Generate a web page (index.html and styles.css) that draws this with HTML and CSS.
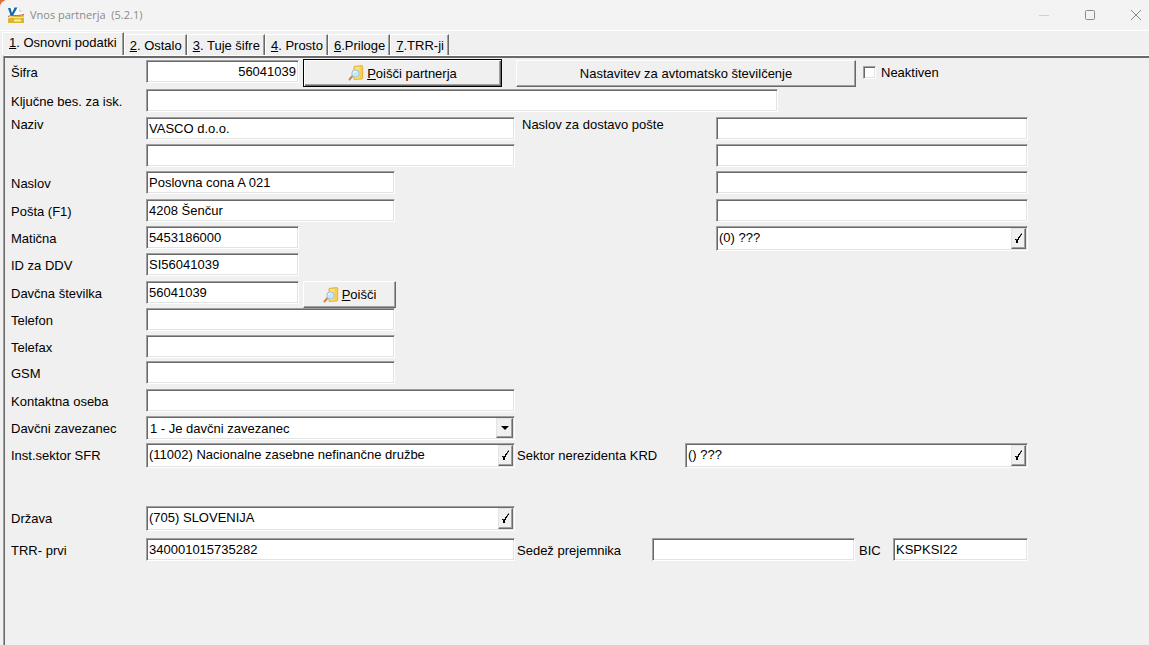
FILE: index.html
```html
<!DOCTYPE html>
<html lang="sl">
<head>
<meta charset="utf-8">
<title>Vnos partnerja (5.2.1)</title>
<link rel="stylesheet" href="styles.css">
</head>
<body>
<svg class="defs" width="0" height="0" aria-hidden="true">
  <symbol id="find" viewBox="0 0 16 16">
    <path d="M6 1.500 13.500.500q1.200 0 1.200 1.200V13q0 1-1.200 1L6 14.500z" fill="#f6cf4e"/>
    <path d="M6.500 2 11.500 1.500v12l-5 .5z" fill="#fbe27a"/>
    <path d="M6 1.500 13.500.500q1.200 0 1.200 1.200V13q0 1-1.200 1L6 14.500z" fill="none" stroke="#e0a62c" stroke-width=".8"/>
    <path d="M4.500 11 1.500 14.500" stroke="#c98a4a" stroke-width="2" stroke-linecap="round"/>
    <circle cx="7.500" cy="8.500" r="3.700" fill="#c6e9fa" stroke="#a3bfd0"/>
    <path d="M5.500 8a2 2 0 0 1 2-1.800" fill="none" stroke="#fff"/>
  </symbol>
  <symbol id="tick" viewBox="0 0 9 11">
    <path d="M1 6.500h1.500M2.500 6.500v3.500M3.500 6v4M4.500 4v3M5.500 3v2M6.500 1.500v2M7.500 .500v1.500" fill="none" stroke="#000"/>
  </symbol>
</svg>
<div class="window">
  <header class="titlebar">
    <svg class="app-icon" viewBox="0 0 17 17" aria-hidden="true">
      <path d="M2 1h10l4 4v11H2z" fill="#fff"/>
      <path d="M12 1v4h4z" fill="#ddd"/>
      <path d="M1 10.500C5 8.500 9 9.500 17 8v8H1z" fill="#ddb52c"/>
      <path d="M1 9.500C5 7.500 9 9.500 17 7.500" fill="none" stroke="#c0563a"/>
      <path d="M1 11c5-2 8 1 16-1" fill="none" stroke="#fff3b0"/>
      <path d="M7 13.500h7" stroke="#fff0a0" stroke-width="2"/>
      <path d="M1 1h2.500L5 6 7.500.500h3L6 8.500H3.500z" fill="#1767b0"/>
    </svg>
    <h1 class="title">Vnos partnerja &nbsp;(5.2.1)</h1>
    <div class="controls">
      <button class="control" type="button" aria-label="Pomanjšaj"><svg viewBox="0 0 12 12"><path d="M1 6.500h10" stroke="#d0d0d0"/></svg></button>
      <button class="control" type="button" aria-label="Povečaj"><svg viewBox="0 0 12 12"><rect x="1.500" y="1.500" width="9" height="9" rx="1" fill="none" stroke="#8a8a8a"/></svg></button>
      <button class="control" type="button" aria-label="Zapri"><svg viewBox="0 0 12 12"><path d="M1 1l10 10M11 1 1 11" stroke="#8a8a8a"/></svg></button>
    </div>
  </header>

  <nav class="tabs" role="tablist">
    <button class="tab tab-active" type="button" role="tab" aria-selected="true"><u>1</u>. Osnovni podatki</button>
    <button class="tab" type="button" role="tab"><u>2</u>. Ostalo</button>
    <button class="tab" type="button" role="tab"><u>3</u>. Tuje šifre</button>
    <button class="tab" type="button" role="tab"><u>4</u>. Prosto</button>
    <button class="tab" type="button" role="tab"><u>6</u>.Priloge</button>
    <button class="tab" type="button" role="tab"><u>7</u>.TRR-ji</button>
  </nav>

  <form class="panel">
    <div class="row row-top">
      <label class="label" for="sifra">Šifra</label>
      <input class="field w-short number" id="sifra" value="56041039">
      <button class="button button-default" type="button"><svg class="icon"><use href="#find"/></svg><span><u>P</u>oišči partnerja</span></button>
      <button class="button button-wide" type="button">Nastavitev za avtomatsko številčenje</button>
      <label class="check"><input type="checkbox">Neaktiven</label>
    </div>
    <div class="row">
      <label class="label" for="kljuc">Ključne bes. za isk.</label>
      <input class="field w-key" id="kljuc">
    </div>

    <div class="columns">
      <div class="lines lines-main">
        <label class="label label-high" for="naziv">Naziv</label>
        <input class="field w-long" id="naziv" value="VASCO d.o.o.">
        <span></span>
        <input class="field w-long" aria-label="Naziv 2">
        <label class="label" for="naslov">Naslov</label>
        <input class="field w-medium" id="naslov" value="Poslovna cona A 021">
        <label class="label" for="posta">Pošta (F1)</label>
        <input class="field w-medium" id="posta" value="4208 Šenčur">
        <label class="label" for="maticna">Matična</label>
        <input class="field w-short" id="maticna" value="5453186000">
        <label class="label" for="ddv">ID za DDV</label>
        <input class="field w-short" id="ddv" value="SI56041039">
        <label class="label" for="davcna">Davčna številka</label>
        <div class="pair">
          <input class="field w-short" id="davcna" value="56041039">
          <button class="button button-find" type="button"><svg class="icon"><use href="#find"/></svg><span><u>P</u>oišči</span></button>
        </div>
        <label class="label" for="telefon">Telefon</label>
        <input class="field w-medium" id="telefon">
        <label class="label" for="telefax">Telefax</label>
        <input class="field w-medium" id="telefax">
        <label class="label" for="gsm">GSM</label>
        <input class="field w-medium" id="gsm">
        <label class="label" for="oseba">Kontaktna oseba</label>
        <input class="field w-long" id="oseba">
        <label class="label" for="zavezanec">Davčni zavezanec</label>
        <div class="select">
          <select id="zavezanec"><option>1 - Je davčni zavezanec</option></select>
          <span class="arrow"></span>
        </div>
      </div>
      <div class="lines lines-post">
        <label class="label label-high" for="dostava">Naslov za dostavo pošte</label>
        <input class="field w-post" id="dostava">
        <input class="field w-post" aria-label="Naslov za dostavo 2">
        <input class="field w-post" aria-label="Naslov za dostavo 3">
        <input class="field w-post" aria-label="Naslov za dostavo 4">
        <div class="lookup w-post">
          <input aria-label="Pošta za dostavo" value="(0) ???">
          <button type="button" aria-label="Izberi pošto"><svg><use href="#tick"/></svg></button>
        </div>
      </div>
    </div>

    <div class="row row-sector">
      <label class="label" for="sfr">Inst.sektor SFR</label>
      <div class="lookup w-long">
        <input id="sfr" value="(11002) Nacionalne zasebne nefinančne družbe">
        <button type="button" aria-label="Izberi sektor SFR"><svg><use href="#tick"/></svg></button>
      </div>
      <label class="label label-krd" for="krd">Sektor nerezidenta KRD</label>
      <div class="lookup w-krd">
        <input id="krd" value="() ???">
        <button type="button" aria-label="Izberi sektor KRD"><svg><use href="#tick"/></svg></button>
      </div>
    </div>
    <div class="row row-country">
      <label class="label" for="drzava">Država</label>
      <div class="lookup w-long">
        <input id="drzava" value="(705) SLOVENIJA">
        <button type="button" aria-label="Izberi državo"><svg><use href="#tick"/></svg></button>
      </div>
    </div>
    <div class="row">
      <label class="label" for="trr">TRR- prvi</label>
      <input class="field w-long" id="trr" value="340001015735282">
      <label class="label label-seat" for="sedez">Sedež prejemnika</label>
      <input class="field w-seat" id="sedez">
      <label class="label label-bic" for="bic">BIC</label>
      <input class="field w-bic" id="bic" value="KSPKSI22">
    </div>
  </form>
</div>
</body>
</html>
```
FILE: styles.css
```css
* {
  box-sizing: border-box;
}

body {
  margin: 0;
  background: #e0703c;
  color: #000;
}

body,
button,
input,
select {
  font: 13px/15px "Liberation Sans", Arial, sans-serif;
}

button,
input,
select {
  margin: 0;
  padding: 0;
  border: 0;
  border-radius: 0;
  color: #000;
}

.defs {
  position: absolute;
}

.window {
  display: flex;
  flex-direction: column;
  min-height: 100vh;
  border-top-left-radius: 8px;
  background: #f0f0f0;
  overflow: hidden;
}

/* Title bar */
.titlebar {
  display: flex;
  align-items: center;
  height: 31px;
  padding-left: 7px;
  background: #f3f3f3;
  border-bottom: 1px solid #fff;
}

.app-icon {
  width: 17px;
  height: 17px;
}

.title {
  flex: 1;
  margin: 0 0 0 6px;
  font: 11px/16px "Open Sans", "Noto Sans", sans-serif;
  color: #8a8a8a;
}

.controls {
  display: flex;
  gap: 34px;
  padding-right: 7px;
}

.control {
  width: 12px;
  height: 12px;
  background: none;
}

.control svg {
  display: block;
  width: 12px;
  height: 12px;
}

/* Tabs */
.tabs {
  display: flex;
  align-items: flex-end;
  height: 24px;
  padding-left: 2px;
}

.tab {
  height: 21px;
  padding: 0 4px 0 5px;
  background: #f0f0f0;
  border-top: 1px solid #fff;
  border-left: 1px solid #fff;
  border-right: 1px solid #696969;
  box-shadow: inset -1px 0 #a0a0a0;
  white-space: nowrap;
}

.tab-active {
  height: 23px;
  padding: 0 6px 3px 6px;
}

/* Form panel */
.panel {
  flex: 1;
  margin-left: 3px;
  padding: 3px 8px 8px 7px;
  border-top: 1px solid #fff;
  border-left: 1px solid #a0a0a0;
  box-shadow: inset 1px 2px #696969, inset 0 1px #a0a0a0;
}

.row {
  display: flex;
  align-items: flex-start;
  height: 28px;
}

.row-top {
  padding-top: 1px;
  height: 30px;
}

.row-sector {
  height: 63px;
}

.row-country {
  height: 32px;
}

.label {
  flex: none;
  width: 135px;
  line-height: 25px;
  white-space: nowrap;
}

.label-high {
  line-height: 15px;
}

.label-krd {
  width: 168px;
  margin-left: 2px;
}

.label-seat {
  width: 135px;
  margin-left: 2px;
}

.label-bic {
  width: 34px;
  margin-left: 4px;
}

.field,
.lookup,
.select {
  background: #fff;
  border: 1px solid;
  border-color: #a0a0a0 #fff #fff #a0a0a0;
  box-shadow: inset 1px 1px #696969, inset -1px -1px #e3e3e3;
}

.field {
  flex: none;
  height: 23px;
  padding: 1px 2px;
  outline: 0;
}

.number {
  text-align: right;
}

.w-short { width: 153px; }
.w-medium { width: 249px; }
.w-long { width: 369px; }
.w-key { width: 632px; }
.w-post { width: 312px; }
.w-krd { width: 343px; }
.w-seat { width: 203px; }
.w-bic { width: 135px; }

.columns {
  display: flex;
  gap: 7px;
}

.lines {
  display: grid;
  align-items: start;
}

.lines-main {
  grid-template-columns: 135px 369px;
  grid-template-rows: 27px 27px 28px 27px 27px 28px 27px 27px 26px 28px 27px 27px;
}

.lines-post {
  grid-template-columns: 194px 312px;
  grid-template-rows: 27px 27px 28px 27px 27px;
}

.lines-post > :not(label) {
  grid-column: 2;
}

.pair {
  display: flex;
  gap: 4px;
}

/* Field with a lookup button */
.lookup {
  display: flex;
  flex: none;
  height: 25px;
  padding: 1px;
}

.lookup input {
  flex: 1;
  min-width: 0;
  height: 19px;
  padding-left: 1px;
  background: none;
  outline: 0;
}

.lookup button {
  display: grid;
  place-items: center;
  width: 15px;
  background: #f0f0f0;
  border: 1px solid;
  border-color: #e3e3e3 #696969 #696969 #e3e3e3;
  box-shadow: inset -1px -1px #a0a0a0;
}

.lookup svg {
  width: 9px;
  height: 11px;
}

.select {
  position: relative;
  height: 24px;
  padding: 1px;
}

.select select {
  width: 100%;
  height: 20px;
  padding-left: 2px;
  appearance: none;
  background: none;
  outline: 0;
}

.arrow {
  position: absolute;
  top: 1px;
  right: 1px;
  bottom: 1px;
  display: grid;
  place-items: center;
  width: 17px;
  background: #f0f0f0;
  border: 1px solid;
  border-color: #e3e3e3 #696969 #696969 #e3e3e3;
  box-shadow: inset -1px -1px #a0a0a0;
  pointer-events: none;
}

.arrow::before {
  content: "";
  border: 4px solid transparent;
  border-top-color: #000;
  border-bottom: 0;
}

/* Buttons */
.button {
  display: flex;
  flex: none;
  align-items: center;
  justify-content: center;
  gap: 3px;
  height: 27px;
  background: #f0f0f0;
  border: 1px solid;
  border-color: #fff #696969 #696969 #fff;
  box-shadow: inset -1px -1px #a0a0a0;
}

.button-default {
  width: 199px;
  height: 28px;
  margin: -1px 0 0 4px;
  border-color: #000;
  box-shadow: inset 1px 1px #fff, inset -1px -1px #696969, inset -2px -2px #a0a0a0;
}

.button-wide {
  width: 340px;
  margin-left: 14px;
}

.button-find {
  width: 93px;
}

.icon {
  width: 16px;
  height: 16px;
}

.check {
  display: flex;
  align-items: center;
  gap: 5px;
  height: 25px;
  margin-left: 7px;
}

.check input {
  width: 13px;
  height: 13px;
  appearance: none;
  background: #fff;
  border: 1px solid;
  border-color: #a0a0a0 #fff #fff #a0a0a0;
  box-shadow: inset 1px 1px #696969, inset -1px -1px #e3e3e3;
}

.check input:checked {
  background: #000;
}
```
